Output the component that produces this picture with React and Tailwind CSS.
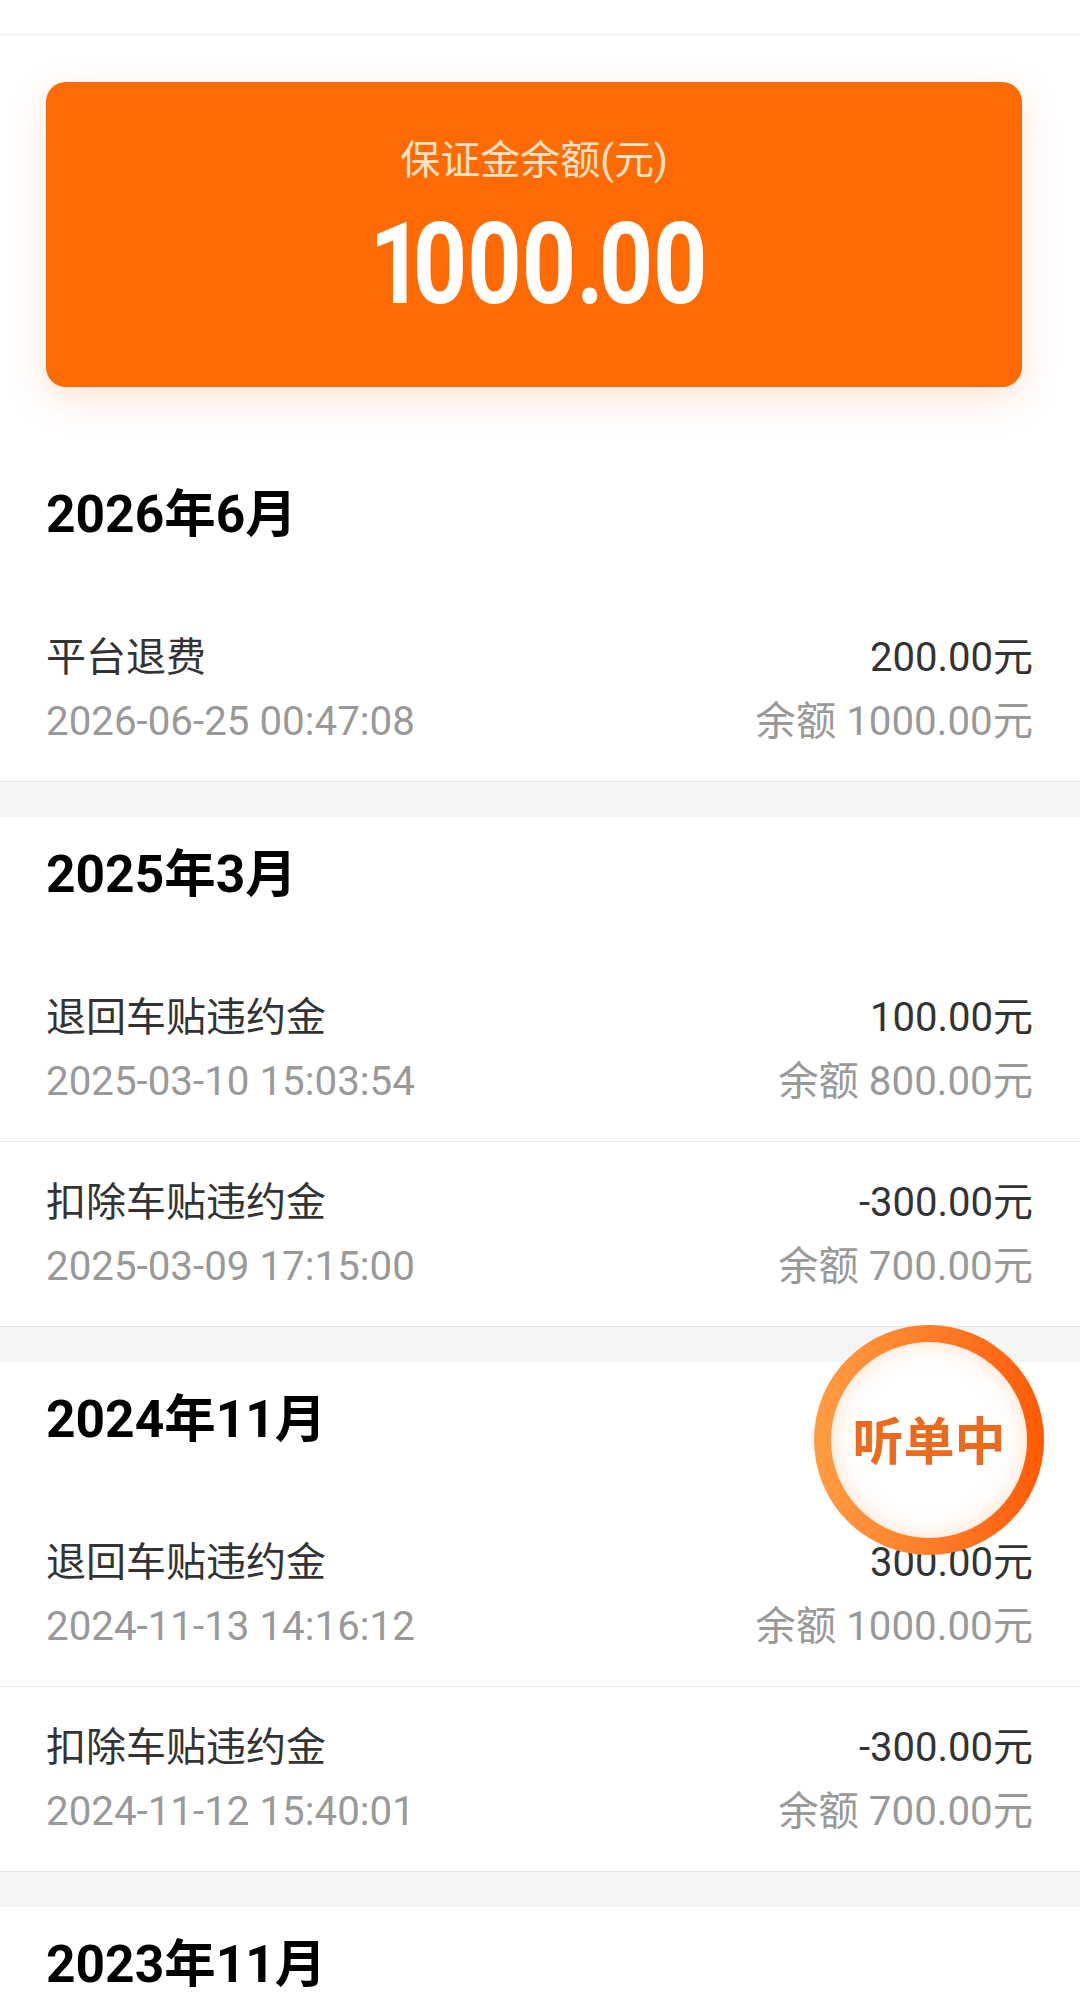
const sections = [
  {
    title: '2026年6月',
    rows: [{ name: '平台退费', time: '2026-06-25 00:47:08', amount: '200.00元', balance: '余额 1000.00元' }],
  },
  {
    title: '2025年3月',
    rows: [
      { name: '退回车贴违约金', time: '2025-03-10 15:03:54', amount: '100.00元', balance: '余额 800.00元' },
      { name: '扣除车贴违约金', time: '2025-03-09 17:15:00', amount: '-300.00元', balance: '余额 700.00元' },
    ],
  },
  {
    title: '2024年11月',
    rows: [
      { name: '退回车贴违约金', time: '2024-11-13 14:16:12', amount: '300.00元', balance: '余额 1000.00元' },
      { name: '扣除车贴违约金', time: '2024-11-12 15:40:01', amount: '-300.00元', balance: '余额 700.00元' },
    ],
  },
  { title: '2023年11月', rows: [] },
];

const Row = ({ row }) => (
  <div className="h-[185px] pl-[46px] pr-[47px] pt-[36px] flex justify-between border-b border-[#e9e9e9] last:border-b-[#e4e6e9]">
    <div>
      <div className="text-[40px] leading-[50px] text-[#333]">{row.name}</div>
      <div className="text-[40.3px] leading-[50px] mt-[14px] text-[#999]">{row.time}</div>
    </div>
    <div className="text-right">
      <div className="text-[40px] leading-[50px] text-[#333]">{row.amount}</div>
      <div className="text-[40.3px] leading-[50px] mt-[14px] text-[#999]">{row.balance}</div>
    </div>
  </div>
);

const Section = ({ section }) => (
  <div className="bg-white">
    <div className="h-[140px] px-[46px] pt-[26px] text-[51.5px] leading-[64px] font-bold text-black">{section.title}</div>
    {section.rows.map((row) => (
      <Row key={row.time} row={row} />
    ))}
  </div>
);

const App = () => {
  return (
    <div className="relative h-[1994px] overflow-hidden bg-[#f4f5f7] font-['Roboto','Noto_Sans_CJK_SC',sans-serif]">
      <div className="h-[35px] bg-white border-b border-[#efefef]" />
      <div className="bg-white pl-[46px] pr-[58px] pt-[47px] pb-[70px]">
        <div className="h-[305px] rounded-[20px] bg-[#ff6a03] shadow-[0_12px_36px_rgba(255,106,3,0.18)] flex flex-col items-center">
          <div className="mt-[51px] text-[40px] leading-[56px] text-[#ffe3c8]">保证金余额(元)</div>
          <div className="mt-[11px] text-[113px] leading-[130px] font-bold text-white scale-x-[0.84] translate-x-[4px]">
            <span className="tracking-[-13px]">1</span>000<span className="tracking-[-6px]">.</span>00
          </div>
        </div>
      </div>
      <div className="flex flex-col gap-[35px]">
        {sections.map((section) => (
          <Section key={section.title} section={section} />
        ))}
      </div>
      <div className="absolute left-[814px] top-[1325px] w-[230px] h-[230px] rounded-full p-[17px] bg-gradient-to-r from-[#ff9c42] to-[#ff5a00]">
        <div className="w-full h-full rounded-full bg-white shadow-[inset_0_0_24px_rgba(255,140,60,0.28)] flex items-center justify-center pt-[6px] text-[51px] font-bold text-[#ec6a1c]">
          听单中
        </div>
      </div>
    </div>
  );
};

export default App;
